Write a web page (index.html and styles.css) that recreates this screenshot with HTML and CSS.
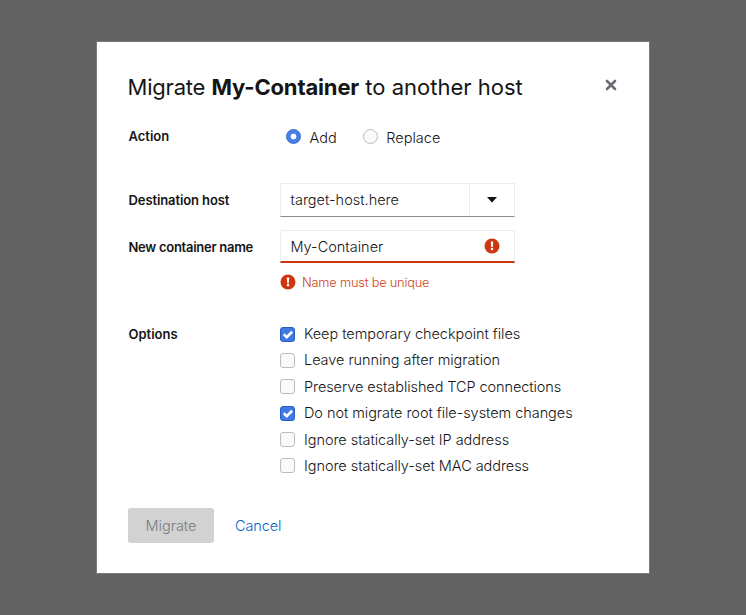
FILE: index.html
```html
<!DOCTYPE html>
<html lang="en">
<head>
<meta charset="utf-8">
<title>Migrate My-Container to another host</title>
<link rel="stylesheet" href="styles.css">
</head>
<body>
<main class="modal" role="dialog" aria-labelledby="title">
  <header class="header">
    <h1 class="title" id="title"><span class="verb">Migrate</span> <strong>My-Container</strong> to another host</h1>
    <button class="close" aria-label="Close"><svg width="12" height="12" viewBox="0 0 12 12"><path d="M2 2 10 10M10 2 2 10" fill="none" stroke="#6a6e73" stroke-width="2.6" stroke-linecap="round"/></svg></button>
  </header>
  <section class="row row-action">
    <div class="label">Action</div>
    <div class="radios">
      <label class="radio"><span class="dot on"></span><span>Add</span></label>
      <label class="radio"><span class="dot"></span><span>Replace</span></label>
    </div>
  </section>
  <section class="row row-host">
    <div class="label label-host">Destination host</div>
    <div class="field select"><span class="value">target-host.here</span><span class="toggle"><svg width="12" height="8" viewBox="0 0 12 8"><path d="M1 1H11L6.6 5.9Q6 6.5 5.4 5.9Z" fill="#151515"/></svg></span></div>
  </section>
  <section class="row row-name">
    <div class="label label-name">New container name</div>
    <div>
      <div class="field invalid"><span class="value">My-Container</span><svg class="alert" width="16" height="16" viewBox="0 0 16 16"><circle cx="8" cy="8" r="7.5" fill="#cf350f"/><path d="M6.8 3.6H9.2L8.9 9H7.1Z" fill="#fff"/><circle cx="8" cy="11.1" r="1.3" fill="#fff"/></svg></div>
      <div class="error"><svg width="16" height="16" viewBox="0 0 16 16"><circle cx="8" cy="8" r="7.5" fill="#cf350f"/><path d="M6.8 3.6H9.2L8.9 9H7.1Z" fill="#fff"/><circle cx="8" cy="11.1" r="1.3" fill="#fff"/></svg><span class="error-text">Name must be unique</span></div>
    </div>
  </section>
  <section class="row row-options">
    <div class="label">Options</div>
    <div class="options">
      <label class="option"><span class="box on"><svg width="14" height="14" viewBox="0 0 14 14"><path d="M2.9 6.8 6.2 9.8 12 4" fill="none" stroke="#fff" stroke-width="2.8"/></svg></span><span>Keep temporary checkpoint files</span></label>
      <label class="option"><span class="box"></span><span>Leave running after migration</span></label>
      <label class="option"><span class="box"></span><span class="tight">Preserve established TCP connections</span></label>
      <label class="option"><span class="box on"><svg width="14" height="14" viewBox="0 0 14 14"><path d="M2.9 6.8 6.2 9.8 12 4" fill="none" stroke="#fff" stroke-width="2.8"/></svg></span><span>Do not migrate root file-system changes</span></label>
      <label class="option"><span class="box"></span><span>Ignore statically-set IP address</span></label>
      <label class="option"><span class="box"></span><span>Ignore statically-set MAC address</span></label>
    </div>
  </section>
  <footer class="footer">
    <button class="migrate" disabled>Migrate</button>
    <button class="cancel">Cancel</button>
  </footer>
</main>
</body>
</html>
```

FILE: styles.css
```css
* { box-sizing: border-box; }
body {
  margin: 0;
  height: 615px;
  padding: 42px 0 0 97px;
  background: #626262;
  color: #151515;
  font: 300 14.5px/20px Inter, "Liberation Sans", sans-serif;
}
.modal {
  width: 552px;
  height: 531px;
  padding: 30px 31px 0;
  background: #fff;
  box-shadow: 0 0 0 1px #7b7b7b;
}
button { border: 0; padding: 0; background: none; font: inherit; }
svg { display: block; flex: none; }
.header { display: flex; justify-content: space-between; height: 50px; }
.title { margin: 0 0 0 -0.5px; font-size: 22px; line-height: 31px; font-weight: 400; white-space: nowrap; }
.title .verb { letter-spacing: -0.2px; }
.title strong { font-weight: 700; letter-spacing: -0.15px; }
.close { width: 12px; height: 12px; margin: 7px 1px 0 0; }
.row { display: grid; grid-template-columns: 152px 1fr; }
.label { font-size: 13px; font-weight: 600; white-space: nowrap; padding-left: 0.5px; }
.label-host { letter-spacing: -0.1px; }
.label-name { letter-spacing: -0.27px; }
.row-action { height: 61px; padding-top: 4px; }
.radios { display: flex; gap: 26px; padding: 1px 0 0 6px; }
.radio { display: flex; gap: 8.6px; height: 20px; line-height: 21px; }
.dot { width: 15px; height: 15px; margin-top: 2px; border: 1px solid #bcbcbc; border-radius: 50%; background: #fafafa; }
.dot.on { border-color: #3569c4; background: radial-gradient(circle, #fff 0 2.6px, #4880e6 3.2px); }
.row-host { height: 47px; }
.row-host .label, .row-name .label { padding-top: 7px; }
.field {
  display: flex;
  align-items: center;
  width: 235px;
  height: 34px;
  padding-left: 9.5px;
  border: 1px solid #ededed;
  border-bottom: 1px solid #8a8d90;
  white-space: nowrap;
}
.field .value { flex: 1; }
.toggle { display: flex; align-items: center; justify-content: center; width: 45px; height: 100%; border-left: 1px solid #ededed; }
.field.invalid { height: 33px; border-bottom: 2px solid #cf350f; padding-right: 14px; }
.field.invalid .value { padding-top: 2px; }
.row-name { height: 94px; }
.error { display: flex; align-items: center; gap: 6px; height: 20px; margin-top: 9px; font-size: 12.8px; letter-spacing: -0.2px; color: #cf4520; }
.error-text { padding-top: 2px; }
.options { display: flex; flex-direction: column; gap: 6.4px; letter-spacing: -0.055px; }
.tight { letter-spacing: -0.085px; }
.option { display: flex; align-items: center; height: 20px; gap: 9px; white-space: nowrap; }
.box { width: 15px; height: 15px; border: 1px solid #bcbcbc; border-radius: 3px; background: #fafafa; }
.box.on { border-color: #2b5fbd; background: #4079e3; }
.box svg { width: 13px; height: 13px; }
.row-options { height: 184px; }
.footer { display: flex; gap: 21px; line-height: 35px; }
.migrate { width: 86px; height: 35px; border-radius: 3px; background: #d2d2d2; color: #797c80; }
.cancel { color: #06c; letter-spacing: -0.1px; }
```
